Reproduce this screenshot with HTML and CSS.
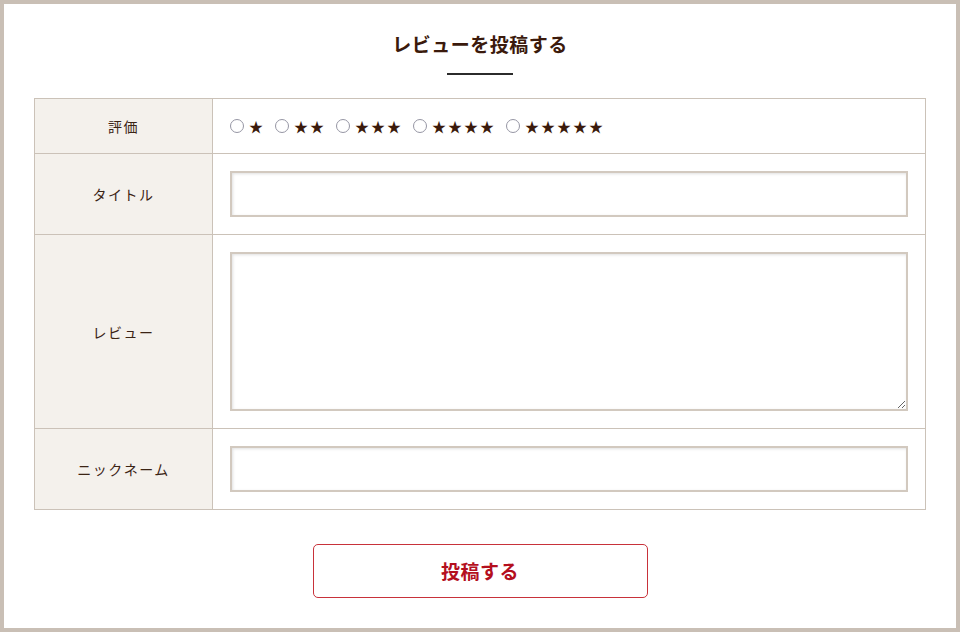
FILE: index.html
```html
<!DOCTYPE html>
<html lang="ja">
<head>
<meta charset="utf-8">
<link rel="stylesheet" href="styles.css">
</head>
<body>
<div class="page">
  <h1 class="title">レビューを投稿する</h1>
  <div class="rule"></div>
  <table class="form">
    <tr class="row-rating">
      <th>評価</th>
      <td>
        <div class="stars">
          <label class="opt"><input type="radio" name="r"><span>★</span></label>
          <label class="opt"><input type="radio" name="r"><span>★★</span></label>
          <label class="opt"><input type="radio" name="r"><span>★★★</span></label>
          <label class="opt"><input type="radio" name="r"><span>★★★★</span></label>
          <label class="opt"><input type="radio" name="r"><span>★★★★★</span></label>
        </div>
      </td>
    </tr>
    <tr>
      <th>タイトル</th>
      <td><input class="field" type="text"></td>
    </tr>
    <tr>
      <th>レビュー</th>
      <td><textarea class="field area"></textarea></td>
    </tr>
    <tr>
      <th>ニックネーム</th>
      <td><input class="field" type="text"></td>
    </tr>
  </table>
  <div class="actions">
    <button class="submit" type="button">投稿する</button>
  </div>
</div>
</body>
</html>
```
FILE: styles.css
```css
html, body {
  margin: 0;
  padding: 0;
}
body {
  font-family: "Noto Sans CJK JP", "Noto Sans", sans-serif;
  color: #3b1f0e;
  background: #fff;
}
.page {
  box-sizing: border-box;
  width: 960px;
  height: 632px;
  border: 4px solid #c9bfb5;
  padding: 26px 30px 0;
}
.title {
  margin: 0;
  text-align: center;
  font-size: 19px;
  line-height: 27px;
  font-weight: 700;
  color: #3b1a0c;
  letter-spacing: 0.5px;
}
.rule {
  width: 66px;
  height: 2px;
  background: #2b2b2b;
  margin: 16px auto 23px;
}
.form {
  width: 892px;
  border-collapse: collapse;
  border: 1px solid #cbc2b8;
}
.form th, .form td {
  border: 1px solid #cbc2b8;
}
.form th {
  width: 177px;
  background: #f4f1ec;
  font-size: 14px;
  font-weight: 400;
  letter-spacing: 1.5px;
  color: #3b2415;
  padding: 0;
}
.form td {
  padding: 17px;
}
.row-rating td {
  padding: 0 17px;
  height: 54px;
}
.stars {
  display: flex;
  align-items: center;
  gap: 10px;
}
.opt {
  display: flex;
  align-items: center;
  gap: 5px;
  font-size: 14px;
  line-height: 20px;
  color: #3b1a0c;
}
.opt input {
  appearance: none;
  -webkit-appearance: none;
  box-sizing: border-box;
  margin: 0;
  width: 14px;
  height: 14px;
  border: 1px solid #9696a4;
  border-radius: 50%;
  background: #fff;
}
.opt span {
  letter-spacing: 2px;
}
.field {
  display: block;
  box-sizing: border-box;
  width: 100%;
  height: 46px;
  margin: 0;
  border: 2px solid #d2c9bf;
  box-shadow: inset 1px 1px 3px rgba(0,0,0,0.12);
  background: #fff;
  font: inherit;
}
.area {
  height: 159px;
  resize: vertical;
}
.actions {
  display: flex;
  justify-content: center;
  padding-top: 34px;
}
.submit {
  appearance: none;
  -webkit-appearance: none;
  box-sizing: border-box;
  width: 335px;
  height: 54px;
  padding: 0 0 2px;
  background: #fff;
  border: 1px solid #c8323a;
  border-radius: 5px;
  color: #b40f1e;
  font-family: "Noto Sans CJK JP", "Noto Sans", sans-serif;
  font-size: 19px;
  font-weight: 700;
  letter-spacing: 0.5px;
}
```
